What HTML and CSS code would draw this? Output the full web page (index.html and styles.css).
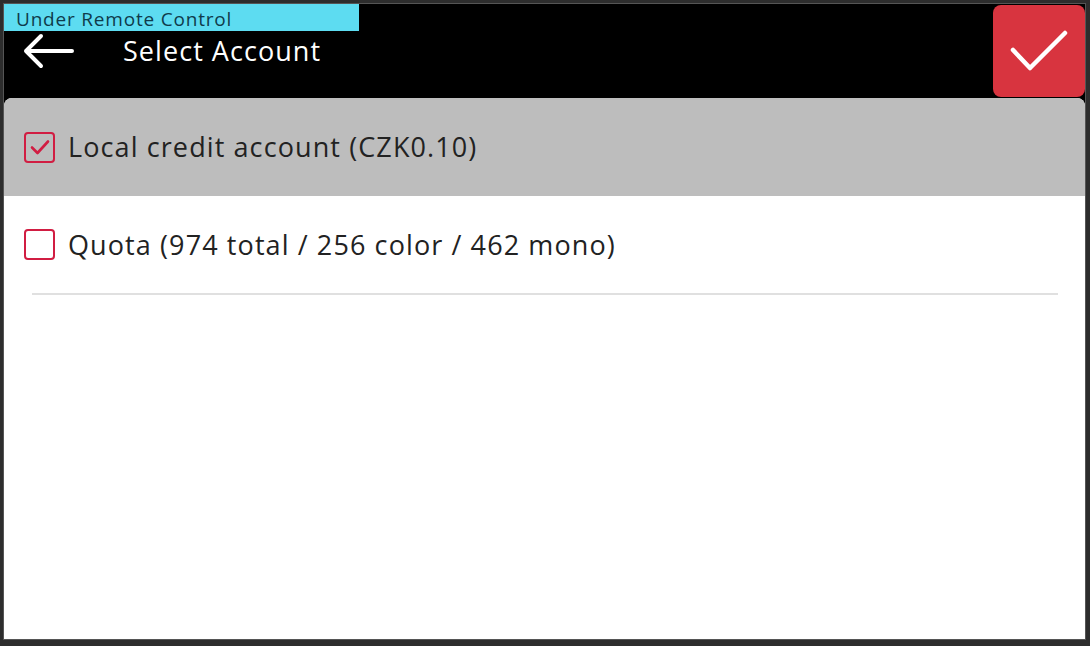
FILE: index.html
```html
<!DOCTYPE html>
<html lang="en">
<head>
  <meta charset="UTF-8">
  <title>Select Account</title>
  <link rel="stylesheet" href="styles.css">
</head>
<body>
  <div class="frame">
    <div class="screen">
      <div class="remote-badge">Under Remote Control</div>

      <div class="header">
        <button class="back-btn" type="button" aria-label="Back">
          <svg width="54" height="38" viewBox="0 0 54 38">
            <path d="M51 19H5M20 4L5 19L20 34" fill="none" stroke="#fff" stroke-width="4" stroke-linecap="round" stroke-linejoin="round"/>
          </svg>
        </button>
        <h1 class="title">Select Account</h1>
        <button class="ok-btn" type="button" aria-label="OK">
          <svg width="92" height="92" viewBox="0 0 92 92">
            <path d="M20 45L37 63L72 28" fill="none" stroke="#fff" stroke-width="4.5" stroke-linecap="round" stroke-linejoin="round"/>
          </svg>
        </button>
      </div>

      <div class="account-list">
        <div class="account selected">
          <span class="checkbox">
            <svg width="24" height="24" viewBox="0 0 24 24">
              <path d="M4 12.5L9.5 18L20 6.5" fill="none" stroke="#d11d42" stroke-width="2.6" stroke-linecap="round" stroke-linejoin="round"/>
            </svg>
          </span>
          <span class="label">Local credit account (CZK0.10)</span>
        </div>
        <div class="account">
          <span class="checkbox"></span>
          <span class="label">Quota (974 total / 256 color / 462 mono)</span>
        </div>
        <hr class="divider">
      </div>
    </div>
  </div>
</body>
</html>
```

FILE: styles.css
```css
html, body {
  margin: 0;
  padding: 0;
}
body {
  background: #2d2d2d;
  font-family: "Open Sans", "Noto Sans", sans-serif;
}
.frame {
  padding: 4px 5px 7px 4px;
}
.screen {
  position: relative;
  height: 635px;
  background: #000;
  display: flex;
  flex-direction: column;
  box-shadow: 0 0 0 1px #555;
}
.remote-badge {
  position: absolute;
  top: 0;
  left: 0;
  width: 343px;
  height: 27px;
  padding-left: 12px;
  background: #5ddcf1;
  color: #0f3b4b;
  font-size: 19px;
  letter-spacing: 0.8px;
  line-height: 30px;
  z-index: 2;
}
.header {
  height: 94px;
  display: flex;
  align-items: flex-start;
}
.back-btn, .ok-btn {
  border: none;
  padding: 0;
  cursor: pointer;
}
.back-btn {
  background: none;
  margin: 28px 0 0 17px;
  width: 54px;
  height: 38px;
}
.back-btn svg {
  display: block;
}
.title {
  margin: 27px 0 0 48px;
  color: #fff;
  font-size: 27px;
  letter-spacing: 1.05px;
  font-weight: normal;
  line-height: 40px;
  flex: 1;
}
.ok-btn {
  width: 92px;
  height: 92px;
  margin-top: 1px;
  background: #d8343f;
  border-radius: 8px;
}
.ok-btn svg {
  display: block;
}
.account-list {
  flex: 1;
  background: #fff;
  border-radius: 8px 8px 0 0;
  overflow: hidden;
}
.account {
  height: 97px;
  display: flex;
  align-items: center;
  padding-left: 20px;
  color: #222;
  font-size: 27px;
  letter-spacing: 1.1px;
}
.account.selected {
  height: 98px;
  background: #bdbdbd;
}
.checkbox {
  width: 27px;
  height: 27px;
  border: 2.5px solid #d11d42;
  border-radius: 4px;
  display: flex;
  align-items: center;
  justify-content: center;
  margin-right: 13px;
  flex-shrink: 0;
}
.label {
  line-height: 36px;
}
.divider {
  margin: 0 27px 0 28px;
  border: none;
  border-top: 2px solid #e0e0e0;
}
```
